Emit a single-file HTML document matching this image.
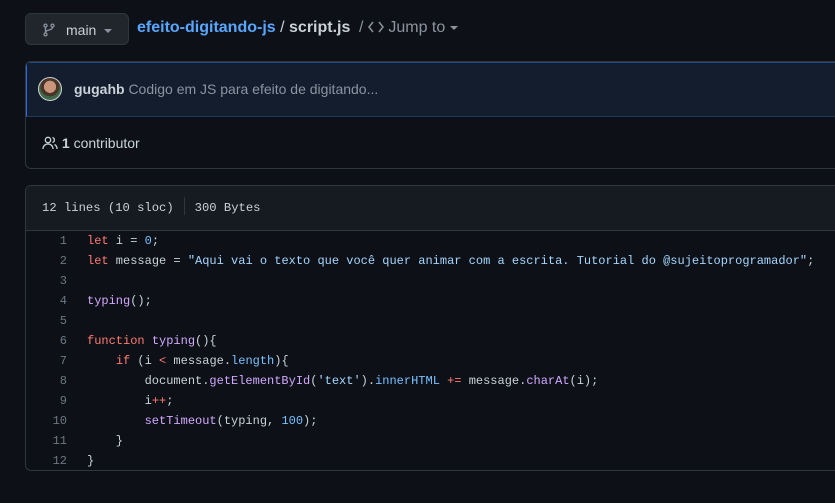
<!DOCTYPE html>
<html><head><meta charset="utf-8"><style>
*{margin:0;padding:0;box-sizing:border-box}
body{width:835px;height:503px;overflow:hidden;background:#0d1117;font-family:"Liberation Sans",sans-serif;color:#c9d1d9;position:relative}
.abs{position:absolute}
.btn{left:25px;top:13px;width:104px;height:32px;background:#21262d;border:1px solid #30363d;border-radius:6px}
.caret{display:inline-block;width:0;height:0;border-left:4px solid transparent;border-right:4px solid transparent;border-top:4px solid currentColor;vertical-align:middle}
.commit{left:25px;top:61px;width:830px;height:108px;border:1px solid #30363d;border-radius:6px;overflow:hidden}
.commit .top{height:55px;background:#131d2e;border-bottom:1px solid #1f3a5f;border-left:1px solid #1f6feb;border-top:1px solid #1f4a85}
.code{left:25px;top:185px;width:830px;height:286px;border:1px solid #30363d;border-radius:6px;overflow:hidden}
.code .hd{height:45px;background:#161b22;border-bottom:1px solid #30363d;font-family:"Liberation Mono",monospace;font-size:12.2px;color:#c9d1d9;padding:11px 0 0 16px}
pre{font-family:"Liberation Mono",monospace;font-size:12px;line-height:20px;color:#c9d1d9}
.ln{position:absolute;left:0;width:41px;text-align:right;color:#6e7681;font-family:"Liberation Mono",monospace;font-size:12px;line-height:20px;top:45px}
.k{color:#ff7b72}.s{color:#a5d6ff}.f{color:#d2a8ff}.n{color:#79c0ff}
</style></head><body>
<div class="abs btn">
<svg class="abs" style="left:16px;top:8px" width="14" height="16" viewBox="0 0 16 16" fill="none" stroke="#8b949e" stroke-width="1.5"><circle cx="4" cy="3" r="1.7"/><circle cx="12" cy="3" r="1.7"/><circle cx="4" cy="13" r="1.7"/><path d="M4 5v6M12 5c0 4-8 2-8 6"/></svg>
<span class="abs" style="left:40px;top:8px;font-size:14px;color:#c9d1d9">main</span>
<span class="abs" style="left:78px;top:8px;color:#8b949e"><span class="caret"></span></span>
</div>
<div class="abs" style="left:137px;top:19px;font-size:16px;white-space:nowrap">
<span style="color:#58a6ff;font-weight:bold">efeito-digitando-js</span> <span style="color:#c9d1d9">/</span> <b style="color:#c9d1d9">script.js</b>
</div>
<div class="abs" style="left:359px;top:19px;font-size:16px;color:#8b949e;white-space:nowrap">/ <svg width="16" height="12" viewBox="0 0 16 12" fill="none" stroke="#8b949e" stroke-width="1.5" style="vertical-align:-1px"><path d="M5 1L1 6l4 5M11 1l4 5-4 5"/></svg> Jump to <span class="caret" style="color:#8b949e"></span></div>
<div class="abs commit">
<div class="top">
<div class="abs" style="left:12px;top:15px;width:24px;height:24px;border-radius:50%;background:radial-gradient(circle at 50% 40%,#c8967a 0 35%,#4a3428 36% 55%,#3d6b4a 56%);border:1px solid #d0d0d0"></div>
<div class="abs" style="left:48px;top:19px;font-size:14px;white-space:nowrap"><b style="color:#c9d1d9">gugahb</b> <span style="color:#8b949e">Codigo em JS para efeito de digitando...</span></div>
</div>
<div class="abs" style="left:16px;top:73px;font-size:14px;white-space:nowrap">
<svg width="16" height="16" viewBox="0 0 16 16" fill="none" stroke="#c9d1d9" stroke-width="1.3" style="vertical-align:-3px"><circle cx="6" cy="5" r="2.7"/><path d="M1 14c0-3 2.2-5 5-5s5 2 5 5M10.5 2.5a2.6 2.6 0 010 5M12.5 9.5c1.5.8 2.5 2.4 2.5 4.5"/></svg>
<b>1</b> contributor</div>
</div>
<div class="abs code">
<div class="hd">12 lines (10 sloc)<span style="display:inline-block;width:1px;height:18px;background:#30363d;vertical-align:-4px;margin:0 10px"></span>300 Bytes</div>
<div class="ln">1<br>2<br>3<br>4<br>5<br>6<br>7<br>8<br>9<br>10<br>11<br>12</div>
<pre class="abs" style="left:61px;top:45px"><span class="k">let</span> i = <span class="n">0</span>;
<span class="k">let</span> message = <span class="s">"Aqui vai o texto que você quer animar com a escrita. Tutorial do @sujeitoprogramador"</span>;

<span class="f">typing</span>();

<span class="k">function</span> <span class="f">typing</span>(){
    <span class="k">if</span> (i <span class="k">&lt;</span> message.<span class="n">length</span>){
        document.<span class="f">getElementById</span>(<span class="s">'text'</span>).<span class="n">innerHTML</span> <span class="k">+=</span> message.<span class="f">charAt</span>(i);
        i<span class="k">++</span>;
        <span class="f">setTimeout</span>(typing, <span class="n">100</span>);
    }
}</pre>
</div>
</body></html>
